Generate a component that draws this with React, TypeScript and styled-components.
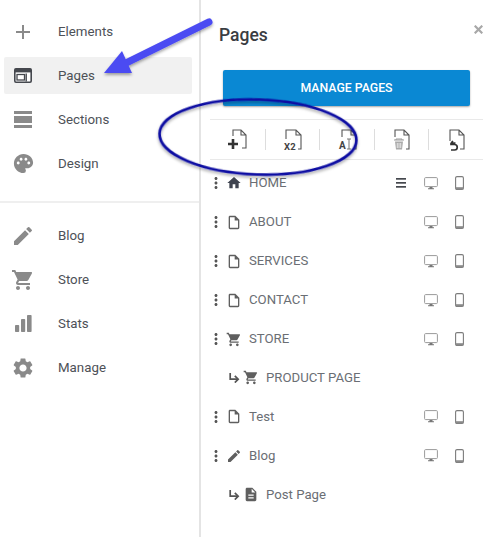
import React from "react";
import styled, { createGlobalStyle } from "styled-components";
import {
  MdAdd, MdPalette, MdEdit, MdShoppingCart, MdSettings, MdHome,
  MdOutlineInsertDriveFile, MdDescription, MdMoreVert,
} from "react-icons/md";

const Global = createGlobalStyle`
  html, body { margin: 0; padding: 0; background: #fff; }
  body { font-family: Roboto, "Liberation Sans", sans-serif; }
`;

const Page = styled.div`
  position: relative; display: flex; width: 490px; height: 537px; overflow: hidden; background: #fff;
`;
const Sidebar = styled.nav`
  flex: none; display: flex; flex-direction: column; gap: 7px; width: 201px; padding-top: 13px; box-sizing: border-box;
  border-right: 2px solid #e4e4e4;
`;
const NavItem = styled.div<{ $active?: boolean }>`
  display: flex; align-items: center; height: 37px; margin: 0 7px 0 4px; padding-left: 7px; border-radius: 2px;
  background: ${(p) => (p.$active ? "#f1f1f1" : "transparent")};
  color: #4d5157; font-size: 13.3px;
`;
const NavIcon = styled.span`
  width: 24px; height: 24px; margin-right: 23px; display: flex; align-items: center; justify-content: center; color: #8a8a8a;
`;
const Divider = styled.div`
  height: 2px; background: #efefef; margin: 12px 0 7px;
`;
const Panel = styled.main`
  flex: 1; min-width: 0; display: flex; flex-direction: column;
`;
const Header = styled.header`
  display: flex; justify-content: space-between; padding: 24px 7px 0 18px;
`;
const Title = styled.h1`
  margin: 0; font-size: 17.5px; line-height: 22px; font-weight: 500; color: #3a3d42;
`;
const Close = styled.span`
  margin-top: 1px; height: 9px; line-height: 0;
`;
const ManageButton = styled.button`
  display: block; width: 247px; height: 36px; margin: 24px 0 0 22px; border: 0; border-radius: 2px; padding: 0;
  background: #0a88d3; color: #fff; font: 500 12.3px Roboto, sans-serif; box-shadow: 0 1px 2px rgba(0,0,0,.35);
`;
const Toolbar = styled.div`
  display: grid; grid-template-columns: repeat(5, 1fr); align-items: center; width: 273px; height: 41px; box-sizing: border-box;
  margin: 13px 0 3px 9px; border-top: 1px solid #e9e9e9; border-bottom: 1px solid #e9e9e9;
`;
const ToolCell = styled.div<{ $first?: boolean }>`
  height: 21px; display: flex; align-items: center; justify-content: center;
  border-left: ${(p) => (p.$first ? "0" : "1px solid #ddd")};
`;
const List = styled.div`
  display: flex; flex-direction: column; padding-top: 1px;
`;
const Row = styled.div<{ $sub?: boolean }>`
  display: flex; align-items: center; height: 38.9px; padding: 0 16px 0 ${(p) => (p.$sub ? "25px" : "6px")};
`;
const Dots = styled.span`
  width: 18px; margin-right: 1px; display: flex; justify-content: center; color: #555;
`;
const RowIcon = styled.span<{ $dark?: boolean }>`
  width: 16px; flex: none; display: flex; justify-content: center; color: ${(p) => (p.$dark ? "#3f4450" : "#5f5f5f")};
  margin-right: 1px;
`;
const Label = styled.span`
  margin-left: 6px; margin-top: -1px; font-size: 13.2px; color: #6a6e74;
`;
const Devices = styled.div`
  margin-left: auto; display: grid; grid-template-columns: 30px 29px 29px; justify-items: center; align-items: center;
`;
const Slot = styled.span`
  display: flex; align-items: center; justify-content: center; height: 16px;
`;
const Overlay = styled.svg`
  position: absolute; inset: 0; pointer-events: none;
`;

const PagesIcon = () => (
  <svg width="18" height="15" viewBox="0 0 18 15">
    <rect x="0.8" y="0.8" width="16.4" height="13.4" rx="1.2" fill="#fff" stroke="#45484e" strokeWidth="1.6" />
    <rect x="0.8" y="0.8" width="16.4" height="3.6" fill="#45484e" />
    <rect x="3" y="6.5" width="7.5" height="5.5" fill="none" stroke="#45484e" strokeWidth="1.3" />
    <rect x="11.5" y="5.5" width="1.4" height="8" fill="#45484e" />
  </svg>
);
const SectionsIcon = () => (
  <svg width="18" height="17" viewBox="0 0 18 17" fill="#8a8a8a">
    <rect width="18" height="3" />
    <rect y="5" width="18" height="7" />
    <rect y="14" width="18" height="3" />
  </svg>
);
const StatsIcon = () => (
  <svg width="17" height="17" viewBox="0 0 17 17" fill="#8a8a8a">
    <rect y="10" width="4.2" height="7" rx="0.8" />
    <rect x="6" y="4" width="4.2" height="13" rx="0.8" />
    <rect x="12" width="4.6" height="17" rx="0.8" />
  </svg>
);
const CloseIcon = () => (
  <svg width="9" height="9" viewBox="0 0 9 9" stroke="#a8a8a8" strokeWidth="2.2">
    <path d="M0.7 0.7l7.6 7.6M8.3 0.7l-7.6 7.6" />
  </svg>
);
const ChildArrow = () => (
  <svg width="11" height="10" viewBox="0 0 11 10" fill="none" stroke="#555" strokeWidth="1.7">
    <path d="M1.2 0v6.2h7" />
    <path d="M5.8 2.8l3.4 3.4-3.4 3.4" />
  </svg>
);
const MenuLines = () => (
  <svg width="10" height="10" viewBox="0 0 10 10" fill="#45484e">
    <rect width="10" height="1.7" />
    <rect y="4" width="10" height="1.7" />
    <rect y="8" width="10" height="1.7" />
  </svg>
);
const Desktop = () => (
  <svg width="14" height="13" viewBox="0 0 14 13">
    <rect x="0.6" y="0.6" width="12.8" height="9" rx="1" fill="none" stroke="#9a9a9a" strokeWidth="1" />
    <path d="M5.5 10h3v1.3h1.5v1H4v-1h1.5z" fill="#777" />
  </svg>
);
const Phone = () => (
  <svg width="9" height="14" viewBox="0 0 9 14">
    <rect x="0.6" y="0.6" width="7.8" height="12.8" rx="1.4" fill="none" stroke="#7c7c7c" strokeWidth="1.1" />
    <rect x="0.6" y="11.2" width="7.8" height="2.2" fill="#8a8a8a" />
  </svg>
);

const sheet = { fill: "none", stroke: "#555", strokeWidth: 1.1 };
const ToolNew = () => (
  <svg width="24" height="26" viewBox="0 0 24 26" overflow="visible">
    <path d="M8 9V3h8l5 5v13h-4M16 3v5h5" {...sheet} />
    <path d="M8 12v10M3 17h10" stroke="#333" strokeWidth="2.6" />
  </svg>
);
const ToolCopy = () => (
  <svg width="24" height="26" viewBox="0 0 24 26" overflow="visible">
    <path d="M6 12V3h10l5 5v14h-3M16 3v5h5" {...sheet} />
    <text x="4" y="23" fontSize="9.5" fontWeight="700" fontFamily="Roboto, sans-serif" fill="#444" letterSpacing="0.3">X2</text>
  </svg>
);
const ToolRename = () => (
  <svg width="24" height="26" viewBox="0 0 24 26" overflow="visible">
    <path d="M7 10V3h9l5 5v14h-3M16 3v5h5" {...sheet} />
    <text x="4" y="22" fontSize="10" fontWeight="700" fontFamily="Roboto, sans-serif" fill="#444">A</text>
    <path d="M12 12h4M14 12v10M12 22h4" stroke="#777" strokeWidth="1" fill="none" />
  </svg>
);
const ToolDelete = () => (
  <svg width="24" height="26" viewBox="0 0 24 26" overflow="visible">
    <path d="M5 10V3h9l5 5v14h-3M14 3v5h5" {...sheet} />
    <path d="M4 13h10M6 13v-1h6v1" stroke="#999" strokeWidth="1" fill="none" />
    <path d="M5 14.5h8l-1 8H6z" fill="#aaa" />
    <path d="M7.3 16v5M9 16v5M10.7 16v5" stroke="#fff" strokeWidth="0.7" />
  </svg>
);
const ToolRestore = () => (
  <svg width="24" height="26" viewBox="0 0 24 26" overflow="visible">
    <path d="M6 14V3h9l5 5v14h-4M15 3v5h5" {...sheet} />
    <path d="M7 16H11.5M7 16l2-2M7 16v1.5h3.5a2.7 2.7 0 0 1 0 5.5H7" stroke="#333" strokeWidth="1.7" fill="none" />
  </svg>
);

const File = () => <MdOutlineInsertDriveFile size={17} />;
const Cart = () => <MdShoppingCart size={17} />;

type PageRow = { label: string; icon: React.ReactNode; sub?: boolean; home?: boolean };
const rows: PageRow[] = [
  { label: "HOME", icon: <MdHome size={18} />, home: true },
  { label: "ABOUT", icon: <File /> },
  { label: "SERVICES", icon: <File /> },
  { label: "CONTACT", icon: <File /> },
  { label: "STORE", icon: <Cart /> },
  { label: "PRODUCT PAGE", icon: <Cart />, sub: true },
  { label: "Test", icon: <File /> },
  { label: "Blog", icon: <MdEdit size={16} /> },
  { label: "Post Page", icon: <MdDescription size={17} />, sub: true },
];
const navTop = [
  { label: "Elements", icon: <MdAdd size={32} /> },
  { label: "Pages", icon: <PagesIcon />, active: true },
  { label: "Sections", icon: <SectionsIcon /> },
  { label: "Design", icon: <MdPalette size={23} /> },
];
const navBottom = [
  { label: "Blog", icon: <MdEdit size={24} /> },
  { label: "Store", icon: <MdShoppingCart size={24} /> },
  { label: "Stats", icon: <StatsIcon /> },
  { label: "Manage", icon: <MdSettings size={24} /> },
];
const tools = [<ToolNew />, <ToolCopy />, <ToolRename />, <ToolDelete />, <ToolRestore />];

export default function App() {
  return (
    <Page>
      <Global />
      <Sidebar>
        {navTop.map((n) => (
          <NavItem key={n.label} $active={n.active}>
            <NavIcon>{n.icon}</NavIcon>
            {n.label}
          </NavItem>
        ))}
        <Divider />
        {navBottom.map((n) => (
          <NavItem key={n.label}>
            <NavIcon>{n.icon}</NavIcon>
            {n.label}
          </NavItem>
        ))}
      </Sidebar>
      <Panel>
        <Header>
          <Title>Pages</Title>
          <Close><CloseIcon /></Close>
        </Header>
        <ManageButton>MANAGE PAGES</ManageButton>
        <Toolbar>
          {tools.map((t, i) => (
            <ToolCell key={i} $first={i === 0}>{t}</ToolCell>
          ))}
        </Toolbar>
        <List>
          {rows.map((r) => (
            <Row key={r.label} $sub={r.sub}>
              {r.sub ? (
                <RowIcon><ChildArrow /></RowIcon>
              ) : (
                <Dots><MdMoreVert size={18} /></Dots>
              )}
              <RowIcon $dark={r.home}>{r.icon}</RowIcon>
              <Label>{r.label}</Label>
              {!r.sub && (
                <Devices>
                  <Slot>{r.home && <MenuLines />}</Slot>
                  <Slot><Desktop /></Slot>
                  <Slot><Phone /></Slot>
                </Devices>
              )}
            </Row>
          ))}
        </List>
      </Panel>
      <Overlay width="490" height="537" viewBox="0 0 490 537">
        <defs>
          <filter id="soft" x="-20%" y="-20%" width="140%" height="150%">
            <feDropShadow dx="0" dy="2" stdDeviation="1.6" floodColor="#000" floodOpacity="0.35" />
          </filter>
        </defs>
        <ellipse cx="258" cy="137" rx="98.5" ry="37.5" transform="rotate(2 258 137)" fill="none" stroke="#0c0ca2" strokeWidth="2.6" filter="url(#soft)" />
        <g filter="url(#soft)">
          <path d="M209 22L126 63" stroke="#4c4cf2" strokeWidth="7" strokeLinecap="round" fill="none" />
          <path d="M104 73L122 51L132 73Z" fill="#4c4cf2" />
        </g>
      </Overlay>
    </Page>
  );
}
